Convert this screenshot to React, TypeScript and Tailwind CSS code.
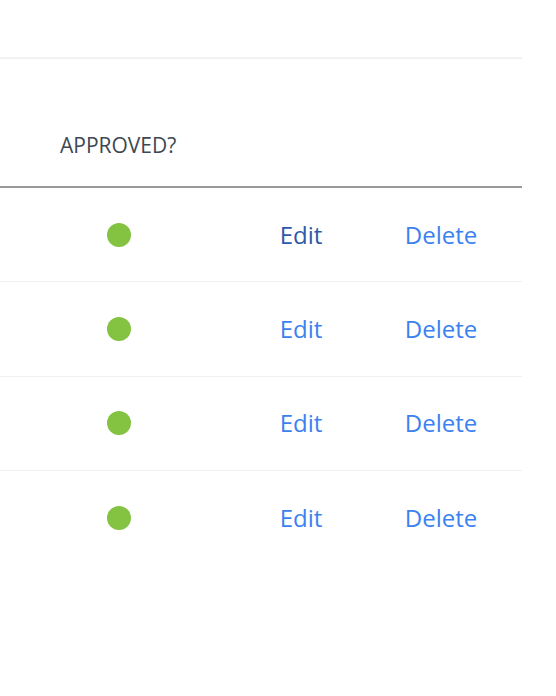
import React from "react";

const rows = [1, 2, 3, 4];

const App = () => {
  return (
    <div className="w-[556px] h-[696px] bg-white" style={{ fontFamily: "'Open Sans', sans-serif" }}>
      <div className="h-[57px]" />
      <div className="w-[522px] border-t-2 border-[#f2f2f2]">
        <div className="flex items-end h-[129px] pb-[25px] border-b-2 border-[#999999]">
          <div className="w-[60px]" />
          <div className="text-[21px] leading-[32px] text-[#3d4852] uppercase">Approved?</div>
        </div>
        {rows.map((r, idx) => (
          <div
            key={r}
            className={`flex items-center h-[94.4px] ${idx < rows.length - 1 ? "border-b border-[#f0f0f2]" : ""}`}
          >
            <div className="w-[60px]" />
            <div className="w-[118px] flex justify-center">
              <span className="block w-6 h-6 rounded-full bg-[#84c341]" />
            </div>
            <div className="w-[62px]" />
            <div className="w-[122px] text-center text-[24px] leading-[32px]">
              <a className={idx === 0 ? "text-[#2c5aa8]" : "text-[#3b82f0]"} href="#">
                Edit
              </a>
            </div>
            <div className="w-[158px] text-center text-[24px] leading-[32px]">
              <a className="text-[#3b82f0]" href="#">
                Delete
              </a>
            </div>
          </div>
        ))}
      </div>
    </div>
  );
};

export default App;
